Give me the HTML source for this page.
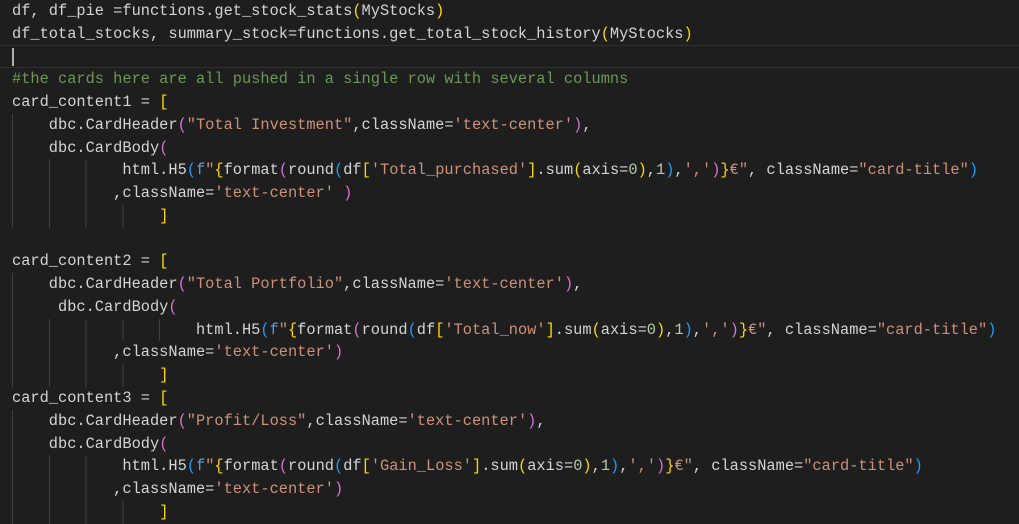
<!DOCTYPE html>
<html><head><meta charset="utf-8"><style>
html,body{margin:0;padding:0;background:#1e1e1e;width:1019px;height:524px;overflow:hidden}
.ed{position:absolute;left:12px;top:0;font-family:"Liberation Mono",monospace;font-size:15.33px;color:#d4d4d4}
.l{height:22.77px;line-height:22.77px;position:relative;white-space:pre}
.s{color:#ce9178}.c{color:#6a9955}.y{color:#ffd700}.p{color:#da70d6}.b{color:#179fff}.k{color:#569cd6}.n{color:#b5cea8}
.g{position:absolute;left:0;top:0;height:22.77px;background:repeating-linear-gradient(to right,#404040 0 1px,transparent 1px 36.8px)}
.cur{position:absolute;left:0;width:1019px;top:45px;height:21px;border-top:1px solid #303030;border-bottom:1px solid #303030}
.caret{position:absolute;left:12px;top:48px;width:2px;height:18px;background:#aeafad}
</style></head><body>
<div class="cur"></div><div class="caret"></div>
<div class="ed"><div class="l">df, df_pie =functions.get_stock_stats<span class="y">(</span>MyStocks<span class="y">)</span></div><div class="l">df_total_stocks, summary_stock=functions.get_total_stock_history<span class="y">(</span>MyStocks<span class="y">)</span></div><div class="l"> </div><div class="l"><span class="c">#the cards here are all pushed in a single row with several columns</span></div><div class="l">card_content1 = <span class="y">[</span></div><div class="l"><span class="g" style="width:4ch"></span>    dbc.CardHeader<span class="p">(</span><span class="s">"Total Investment"</span>,className=<span class="s">'text-center'</span><span class="p">)</span>,</div><div class="l"><span class="g" style="width:4ch"></span>    dbc.CardBody<span class="p">(</span></div><div class="l"><span class="g" style="width:12ch"></span>            html.H5<span class="b">(</span><span class="k">f</span><span class="s">"</span><span class="y">{</span>format<span class="p">(</span>round<span class="b">(</span>df<span class="y">[</span><span class="s">'Total_purchased'</span><span class="y">]</span>.sum<span class="y">(</span>axis=<span class="n">0</span><span class="y">)</span>,<span class="n">1</span><span class="b">)</span>,<span class="s">','</span><span class="p">)</span><span class="y">}</span><span class="s">€"</span>, className=<span class="s">"card-title"</span><span class="b">)</span></div><div class="l"><span class="g" style="width:11ch"></span>           ,className=<span class="s">'text-center'</span> <span class="p">)</span></div><div class="l"><span class="g" style="width:16ch"></span>                <span class="y">]</span></div><div class="l"> </div><div class="l">card_content2 = <span class="y">[</span></div><div class="l"><span class="g" style="width:4ch"></span>    dbc.CardHeader<span class="p">(</span><span class="s">"Total Portfolio"</span>,className=<span class="s">'text-center'</span><span class="p">)</span>,</div><div class="l"><span class="g" style="width:4ch"></span>     dbc.CardBody<span class="p">(</span></div><div class="l"><span class="g" style="width:20ch"></span>                    html.H5<span class="b">(</span><span class="k">f</span><span class="s">"</span><span class="y">{</span>format<span class="p">(</span>round<span class="b">(</span>df<span class="y">[</span><span class="s">'Total_now'</span><span class="y">]</span>.sum<span class="y">(</span>axis=<span class="n">0</span><span class="y">)</span>,<span class="n">1</span><span class="b">)</span>,<span class="s">','</span><span class="p">)</span><span class="y">}</span><span class="s">€"</span>, className=<span class="s">"card-title"</span><span class="b">)</span></div><div class="l"><span class="g" style="width:11ch"></span>           ,className=<span class="s">'text-center'</span><span class="p">)</span></div><div class="l"><span class="g" style="width:16ch"></span>                <span class="y">]</span></div><div class="l">card_content3 = <span class="y">[</span></div><div class="l"><span class="g" style="width:4ch"></span>    dbc.CardHeader<span class="p">(</span><span class="s">"Profit/Loss"</span>,className=<span class="s">'text-center'</span><span class="p">)</span>,</div><div class="l"><span class="g" style="width:4ch"></span>    dbc.CardBody<span class="p">(</span></div><div class="l"><span class="g" style="width:12ch"></span>            html.H5<span class="b">(</span><span class="k">f</span><span class="s">"</span><span class="y">{</span>format<span class="p">(</span>round<span class="b">(</span>df<span class="y">[</span><span class="s">'Gain_Loss'</span><span class="y">]</span>.sum<span class="y">(</span>axis=<span class="n">0</span><span class="y">)</span>,<span class="n">1</span><span class="b">)</span>,<span class="s">','</span><span class="p">)</span><span class="y">}</span><span class="s">€"</span>, className=<span class="s">"card-title"</span><span class="b">)</span></div><div class="l"><span class="g" style="width:11ch"></span>           ,className=<span class="s">'text-center'</span><span class="p">)</span></div><div class="l"><span class="g" style="width:16ch"></span>                <span class="y">]</span></div></div>
</body></html>
